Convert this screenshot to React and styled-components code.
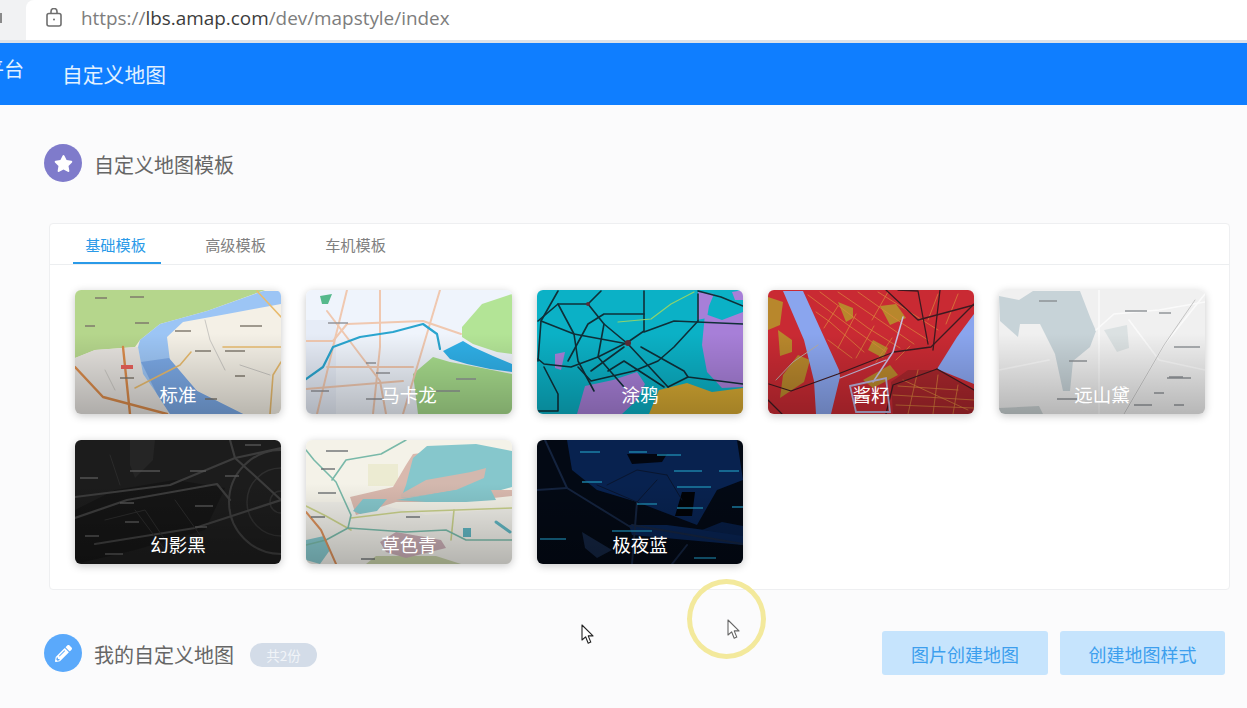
import React from "react";
import styled, { createGlobalStyle } from "styled-components";
import { FaStar, FaPencilAlt } from "react-icons/fa";

const FONT = `"Noto Sans CJK SC", "Noto Sans", sans-serif`;

const GlobalStyle = createGlobalStyle`
  html, body {
    margin: 0;
    padding: 0;
    background: #fbfbfc;
    font-family: ${FONT};
  }
`;

//styled/////////////
const Page = styled.div`
  position: relative;
  width: 1247px;
  height: 708px;
  overflow: hidden;
  background: #fbfbfc;
`;

const AddressBar = styled.div`
  height: 40px;
  display: flex;
  align-items: center;
  background: #f1f2f3;
  border-bottom: 3px solid #dde2e9;
`;

const ReloadStub = styled.div`
  width: 2px;
  height: 10px;
  margin: 0 24px 4px 0;
  background: #8a8a8a;
`;

const UrlField = styled.div`
  flex: 1;
  height: 40px;
  box-sizing: border-box;
  padding: 0 0 5px 20px;
  display: flex;
  align-items: center;
  gap: 19px;
  background: #fff;
  border-radius: 8px 0 0 0;
`;

const UrlText = styled.div`
  font-family: "Open Sans", sans-serif;
  font-size: 18.9px;
  color: #7d7d7d;
  white-space: nowrap;
  b {
    font-weight: 400;
    color: #3c3c3c;
  }
`;

const Header = styled.div`
  height: 62px;
  display: flex;
  align-items: center;
  gap: 38px;
  overflow: hidden;
  background: #0f7eff;
  color: #e2f1ff;
`;

const PlatformName = styled.div`
  margin: 0 0 12px -16px;
  font-size: 20px;
  white-space: nowrap;
`;

const HeaderTitle = styled.div`
  font-size: 20.8px;
  white-space: nowrap;
`;

const Content = styled.div`
  padding: 39px 22px 0 44px;
`;

const SectionRow = styled.div`
  display: flex;
  align-items: center;
  gap: 12px;
`;

const IconBadge = styled.div`
  width: 38px;
  height: 38px;
  flex: none;
  border-radius: 50%;
  display: flex;
  align-items: center;
  justify-content: center;
  color: #fff;
  font-size: ${(p) => p.$size}px;
  background: ${(p) => p.$color};
`;

const SectionTitle = styled.div`
  font-size: 20px;
  color: #666;
  margin-top: 3px;
`;

const Card = styled.div`
  width: 1179px;
  margin: 41px 0 41px 5px;
  height: 365px;
  background: #fff;
  border: 1px solid #eeeff1;
  border-radius: 4px;
`;

const Tabs = styled.div`
  height: 40px;
  display: flex;
  padding-left: 23px;
  border-bottom: 1px solid #eceef0;
`;

const Tab = styled.div`
  width: 88px;
  margin-right: 32px;
  height: 40px;
  box-sizing: border-box;
  padding: 10px 3px 0 0;
  text-align: center;
  font-size: 15.2px;
  line-height: 20px;
  color: ${(p) => (p.$active ? "#2a9ae8" : "#808080")};
  border-bottom: 2px solid ${(p) => (p.$active ? "#2a9ae8" : "transparent")};
`;

const Grid = styled.div`
  display: grid;
  grid-template-columns: repeat(5, 206px);
  grid-auto-rows: 124px;
  column-gap: 25px;
  row-gap: 26px;
  padding: 25px 0 0 25px;
`;

const Thumb = styled.div`
  position: relative;
  overflow: hidden;
  border-radius: 6px;
  box-shadow: 0 2px 8px rgba(0, 0, 0, 0.22);
  svg {
    display: block;
    filter: blur(0.7px);
  }
  &::after {
    content: "";
    position: absolute;
    inset: 0;
    background: linear-gradient(
      to bottom,
      rgba(0, 0, 0, 0) 35%,
      rgba(0, 0, 0, 0.24) 100%
    );
  }
`;

const ThumbLabel = styled.div`
  position: absolute;
  z-index: 1;
  left: 0;
  right: 0;
  bottom: 6px;
  text-align: center;
  font-size: 18.5px;
  line-height: 28px;
  color: #fff;
`;

const CountPill = styled.div`
  margin-left: 4px;
  margin-top: 3px;
  width: 67px;
  height: 24px;
  border-radius: 12px;
  text-align: center;
  font-size: 13.5px;
  line-height: 24px;
  color: #f1f4f8;
  background: #d3dce8;
`;

const Actions = styled.div`
  margin-left: auto;
  display: flex;
  gap: 12px;
`;

const ActionButton = styled.div`
  width: ${(p) => p.$width}px;
  height: 44px;
  border-radius: 3px;
  text-align: center;
  font-size: 18px;
  line-height: 46px;
  color: #3d9fee;
  background: #c6e4fd;
`;

const Ring = styled.div`
  position: absolute;
  left: 687px;
  top: 579px;
  width: 69px;
  height: 70px;
  border: 5px solid #f3e99c;
  border-radius: 50%;
`;

const Cursor = styled.svg`
  position: absolute;
  left: ${(p) => p.$x}px;
  top: ${(p) => p.$y}px;
`;

////////////////////////////////

const Line = ({ d, c, w }) => (
  <polyline points={d} fill="none" stroke={c} strokeWidth={w} strokeLinejoin="round" strokeLinecap="round" />
);

const Lines = ({ list, c, w }) => list.map((d) => <Line key={d} d={d} c={c} w={w} />);

const Marks = ({ list, c }) =>
  list.map(([x, y, w]) => <rect key={`${x}-${y}`} x={x} y={y} width={w} height="2" fill={c} opacity="0.7" />);

const MapSvg = ({ bg, children }) => (
  <svg width="206" height="124" viewBox="0 0 206 124">
    <rect width="206" height="124" fill={bg} />
    {children}
  </svg>
);

const StandardMap = () => (
  <MapSvg bg="#f4f0e6">
    <polygon points="0,0 190,0 132,21 85,34 65,50 60,57 20,60 0,68" fill="#b5d68c" />
    <polygon points="0,68 20,60 63,57 68,84 82,104 95,124 0,124" fill="#e6e3df" />
    <polygon points="188,1 206,1 206,14 152,24 108,32 92,47 95,71 122,101 168,124 95,124 82,104 68,84 63,57 65,50 85,34 132,21" fill="#9cc5f5" />
    <polygon points="66,72 94,68 122,101 168,124 95,124 82,104" fill="#7ba9e6" />
    <Lines c="#e8bb6e" w="1.6" list={["148,57 206,57", "60,98 105,75 116,62", "195,124 198,85 206,72", "182,1 206,27"]} />
    <Lines c="#d98a4a" w="2.4" list={["0,77 28,107 92,124", "48,57 55,124"]} />
    <Lines c="#c9c7c2" w="1" list={["130,30 135,50 150,80", "30,80 40,100", "165,75 195,85"]} />
    <Marks c="#7a7468" list={[[20, 7, 12], [55, 6, 14], [60, 32, 14], [10, 35, 10], [100, 40, 16], [120, 60, 16], [150, 60, 20], [165, 35, 22], [45, 87, 14], [160, 85, 10], [130, 108, 12]]} />
    <rect x="46" y="75" width="12" height="4" fill="#e8605a" />
  </MapSvg>
);

const MacaronMap = () => (
  <MapSvg bg="#eff4fc">
    <rect x="0" y="30" width="30" height="94" fill="#e6ecf7" />
    <polygon points="156,37 176,14 206,4 206,64 191,62 167,54 156,47" fill="#b3e496" />
    <polygon points="107,84 127,67 144,72 171,77 206,84 206,124 112,124" fill="#a7dc8c" />
    <polygon points="137,61 157,51 167,57 187,66 206,74 206,82 184,79 161,74 144,69" fill="#2fb0e8" />
    <polygon points="14,6 26,4 22,14 16,14" fill="#55b98c" />
    <Lines c="#f0c8b0" w="2" list={["74,0 74,57 67,124", "134,0 117,57 97,124", "41,0 27,57 11,124", "0,51 27,51 41,34 117,31 155,44", "0,99 97,91", "21,77 107,77", "21,21 74,91 80,124"]} />
    <Line d="0,89 17,77 27,57 54,47 87,42 117,34 131,44 134,59" c="#2aa5cf" w="2.2" />
    <Marks c="#8d8f94" list={[[22, 32, 20], [60, 72, 10], [70, 82, 14], [150, 88, 20], [130, 100, 24], [5, 100, 18], [60, 108, 18]]} />
  </MapSvg>
);

const GraffitiMap = () => (
  <MapSvg bg="#0bb1c6">
    <polygon points="168,24 185,30 206,22 206,97 185,98 170,82 165,55" fill="#a77fd8" />
    <polygon points="161,2 177,4 172,16 170,28 160,30" fill="#a77fd8" />
    <polygon points="195,2 206,0 206,10 198,10" fill="#a77fd8" />
    <polygon points="18,64 28,62 24,80 18,78" fill="#a77fd8" />
    <polygon points="48,96 76,90 100,82 108,94 100,110 85,124 40,124" fill="#a77fd8" />
    <polygon points="112,124 122,100 150,93 175,102 206,98 206,124" fill="#d6a932" />
    <Lines c="#0f2f38" w="1.6" list={["1,31 21,14 51,14 64,1", "21,1 4,31 1,71", "107,1 107,41 91,52 61,67 34,77 7,74 1,69", "51,14 67,34 91,54 131,97", "107,42 137,31 206,34", "206,16 184,7 161,1", "161,4 161,31", "21,14 37,44 41,71 57,101", "4,31 37,44 91,54", "67,34 61,67 87,97", "1,121 21,121 21,104 7,77", "41,77 54,91 97,81 121,71 137,57 161,31", "104,57 147,81 151,87 206,94", "71,81 87,71 127,97", "31,71 51,34 67,24 107,24", "54,81 87,57", "131,97 151,87"]} />
    <Line d="81,32 114,29 134,14 157,2" c="#8fd36d" w="1.2" />
    <circle cx="91" cy="53" r="3" fill="#5c2a36" />
    <circle cx="51" cy="14" r="2" fill="#5c2a36" />
  </MapSvg>
);

const SauceMap = () => (
  <MapSvg bg="#c92a33">
    <polygon points="0,7 15,12 12,35 0,40" fill="#b8872c" />
    <polygon points="10,40 24,50 24,62 12,66" fill="#b8872c" />
    <polygon points="70,12 85,18 85,28 78,32" fill="#b8872c" />
    <polygon points="112,16 128,14 138,28 122,35" fill="#b8872c" />
    <polygon points="105,50 120,58 115,68 100,60" fill="#b8872c" />
    <polygon points="15,85 30,65 42,70 36,92 12,108" fill="#b8872c" />
    <polygon points="95,90 122,75 130,85 105,98" fill="#b8872c" />
    <polygon points="123,92 140,80 170,80 206,100 206,124 125,124" fill="#a8262c" />
    <polygon points="15,1 35,1 56,47 71,80 72,87 63,124 48,124 46,91 36,50" fill="#8aa5ee" />
    <polygon points="206,24 206,94 169,79 189,47" fill="#8aa5ee" />
    <Lines c="#dc8a3c" w="0.7" list={["40,5 80,35 118,62", "52,2 100,38 132,58", "70,2 120,36 146,54", "90,2 135,34 160,50", "110,2 170,40", "48,22 62,32 96,62", "60,50 84,68", "70,16 56,38", "88,24 70,58", "106,36 88,68", "124,48 108,72", "142,56 128,70", "120,2 104,30", "170,4 160,30", "190,4 178,34", "135,90 200,120", "150,80 140,124", "170,85 165,124", "190,95 185,124", "125,105 206,110", "128,115 206,118", "130,96 190,100"]} />
    <Lines c="#3d1a20" w="1.3" list={["1,94 23,101 70,84 126,62 163,57 206,14", "130,0 150,1 160,54", "118,0 150,30 206,15", "169,79 125,95 118,124", "169,79 206,100", "172,0 165,60", "0,110 14,124"]} />
    <Line d="135,27 125,62 105,92" c="#c8bfe0" w="1.5" />
    <Line d="72,88 118,70" c="#c8bfe0" w="1.2" />
    <polygon points="82,96 118,88 122,122 88,122" fill="none" stroke="#b9b2dc" strokeWidth="1.8" />
    <Line d="8,90 25,72 50,55" c="#b7ada0" w="1" />
  </MapSvg>
);

const MountainMap = () => (
  <MapSvg bg="#f0f0f0">
    <polygon points="34,1 81,1 91,27 97,41 91,57 74,71 71,101 64,101 56,64 41,34 21,34 19,47 1,31 0,6 20,10" fill="#c7d3d8" />
    <polygon points="105,40 128,35 130,58 118,62" fill="#dbe1e2" />
    <polygon points="0,118 40,116 44,124 0,124" fill="#c9d1d2" />
    <Lines c="#fafafa" w="1.6" list={["97,40 115,24 160,20 206,12", "206,4 165,55 125,124", "100,0 100,124", "130,30 160,70 206,80", "0,80 50,70"]} />
    <Line d="196,10 165,55 125,124" c="#b7b7b7" w="0.8" />
    <Marks c="#8a8f93" list={[[40, 10, 18], [126, 20, 22], [160, 22, 12], [175, 56, 26], [70, 70, 18], [170, 86, 14], [168, 87, 24], [155, 102, 10], [58, 108, 20], [135, 114, 18], [175, 114, 10]]} />
  </MapSvg>
);

const PhantomMap = () => (
  <MapSvg bg="#1c1c1c">
    <polygon points="55,0 80,0 78,20 60,38 55,25" fill="#252525" />
    <polygon points="0,70 40,50 100,40 150,48 130,90 60,110 0,124" fill="#151515" />
    <g fill="none" stroke="#3a3a3a" strokeWidth="2">
      <circle cx="206" cy="62" r="52" />
    </g>
    <g fill="none" stroke="#2e2e2e" strokeWidth="1.5">
      <circle cx="206" cy="62" r="34" />
      <circle cx="206" cy="62" r="11" />
    </g>
    <Lines c="#3c3c3c" w="2.2" list={["0,57 95,45 160,18 206,8", "0,78 52,60 142,44 155,60", "20,104 120,88 206,60", "155,0 160,18 180,36 206,60"]} />
    <Lines c="#2a2a2a" w="1" list={["60,70 90,110", "100,60 125,95", "30,80 70,70 90,100", "35,15 45,45"]} />
    <Marks c="#555" list={[[55, 30, 30], [5, 37, 18], [115, 30, 16], [150, 35, 14], [45, 62, 14], [120, 65, 18], [50, 81, 14], [10, 95, 14], [120, 86, 12], [170, 4, 16], [30, 113, 18]]} />
  </MapSvg>
);

const GrassMap = () => (
  <MapSvg bg="#f4f2e8">
    <polygon points="0,62 60,62 120,75 206,68 206,124 0,124" fill="#eeede7" />
    <rect x="62" y="24" width="30" height="22" fill="#ecebd2" />
    <polygon points="44,57 87,47 100,25 107,14 125,12 120,50 206,50 206,56 150,62 90,62 50,75" fill="#d9b9ae" />
    <polygon points="107,18 121,6 170,4 206,11 206,47 195,50 165,50 120,55 95,58 100,45" fill="#86c7cc" />
    <polygon points="95,54 120,40 165,32 180,28 178,38 150,50 120,55 95,58" fill="#d3b8ae" />
    <polygon points="90,60 120,55 150,50 185,50 190,60 160,62 120,62" fill="#86c7cc" />
    <polygon points="47,71 57,59 81,59 71,71 54,74" fill="#86c7cc" />
    <polygon points="0,120 0,100 18,96 24,110 14,124" fill="#86c7cc" />
    <polygon points="60,124 70,116 130,116 155,124" fill="#c5cfa6" />
    <polygon points="74,102 90,92 135,100 140,108 100,118 80,112" fill="#c8acb4" />
    <rect x="157" y="88" width="8" height="9" fill="#5fb3bf" />
    <Line d="190,82 204,92" c="#5fb3bf" w="3" />
    <Lines c="#c8d08a" w="1.6" list={["45,78 95,72 206,68", "148,70 145,100", "0,66 20,76 45,90"]} />
    <Lines c="#79b9a9" w="1.6" list={["0,10 8,20 30,42 45,75 42,88", "26,40 40,20 75,14 100,0", "42,88 100,92 140,90 160,100 206,100", "0,105 20,100 42,88"]} />
    <Line d="0,72 15,90 30,124" c="#d98f5a" w="2" />
    <Marks c="#6b6f72" list={[[20, 10, 22], [15, 28, 14], [12, 52, 18], [100, 76, 14], [5, 76, 14], [55, 118, 14]]} />
  </MapSvg>
);

const NightMap = () => (
  <MapSvg bg="#030914">
    <polygon points="30,0 200,0 206,40 180,50 160,85 100,62 60,50 35,30" fill="#08224f" />
    <polygon points="92,85 130,85 206,95 206,105 150,100 95,95" fill="#08224f" />
    <polygon points="165,90 185,82 206,86 206,96" fill="#071d44" />
    <polygon points="145,52 158,52 155,76 138,76" fill="#010308" />
    <polygon points="90,14 130,14 125,22 95,24" fill="#020610" />
    <polygon points="45,92 75,110 60,118 48,108" fill="#13233f" />
    <Lines c="#14233e" w="2" list={["8,0 30,48 95,88", "0,50 30,48", "100,62 95,124", "95,85 206,104", "135,124 150,105"]} />
    <Lines c="#08152e" w="1" list={["70,45 100,30 130,35", "120,40 100,62 60,45", "130,35 145,60"]} />
    <Marks c="#1d86ad" list={[[43, 11, 20], [92, 11, 18], [120, 14, 24], [45, 41, 20], [137, 30, 28], [182, 30, 20], [140, 46, 34], [100, 63, 20], [140, 67, 26], [195, 66, 11], [75, 90, 40], [3, 98, 26], [157, 117, 22]]} />
  </MapSvg>
);

const templates = [
  { name: "标准", Map: StandardMap },
  { name: "马卡龙", Map: MacaronMap },
  { name: "涂鸦", Map: GraffitiMap },
  { name: "酱籽", Map: SauceMap },
  { name: "远山黛", Map: MountainMap },
  { name: "幻影黑", Map: PhantomMap },
  { name: "草色青", Map: GrassMap },
  { name: "极夜蓝", Map: NightMap },
];

const tabs = ["基础模板", "高级模板", "车机模板"];

const LockIcon = () => (
  <svg width="16" height="19" viewBox="0 0 16 19" fill="none" stroke="#6f6f6f" strokeWidth="1.6">
    <rect x="1" y="5.5" width="14" height="12.5" rx="2" />
    <path d="M5 5.5V3.5a3 3 0 0 1 6 0v2" />
    <circle cx="8" cy="11.5" r="1" fill="#6f6f6f" stroke="none" />
  </svg>
);

const Pointer = ({ x, y, stroke }) => (
  <Cursor $x={x} $y={y} width="13" height="21" viewBox="0 0 13 21">
    <path d="M1 1v15l3.6-3.2 2.6 6.4 2.6-1.1-2.6-6.2H12z" fill="#fff" stroke={stroke} strokeWidth="1.1" strokeLinejoin="round" />
  </Cursor>
);

const App = () => {
  return (
    <Page>
      <GlobalStyle />
      <AddressBar>
        <ReloadStub />
        <UrlField>
          <LockIcon />
          <UrlText>
            https://<b>lbs.amap.com</b>/dev/mapstyle/index
          </UrlText>
        </UrlField>
      </AddressBar>
      <Header>
        <PlatformName>平台</PlatformName>
        <HeaderTitle>自定义地图</HeaderTitle>
      </Header>
      <Content>
        <SectionRow>
          <IconBadge $color="#7f7bcb" $size={19}>
            <FaStar />
          </IconBadge>
          <SectionTitle>自定义地图模板</SectionTitle>
        </SectionRow>
        <Card>
          <Tabs>
            {tabs.map((tab, i) => (
              <Tab key={tab} $active={i === 0}>
                {tab}
              </Tab>
            ))}
          </Tabs>
          <Grid>
            {templates.map(({ name, Map }) => (
              <Thumb key={name}>
                <Map />
                <ThumbLabel>{name}</ThumbLabel>
              </Thumb>
            ))}
          </Grid>
        </Card>
        <SectionRow>
          <IconBadge $color="#5aa9fb" $size={17}>
            <FaPencilAlt />
          </IconBadge>
          <SectionTitle>我的自定义地图</SectionTitle>
          <CountPill>共2份</CountPill>
          <Actions>
            <ActionButton $width={166}>图片创建地图</ActionButton>
            <ActionButton $width={165}>创建地图样式</ActionButton>
          </Actions>
        </SectionRow>
      </Content>
      <Ring />
      <Pointer x={581} y={624} stroke="#222" />
      <Pointer x={727} y={619} stroke="#666" />
    </Page>
  );
};

export default App;
